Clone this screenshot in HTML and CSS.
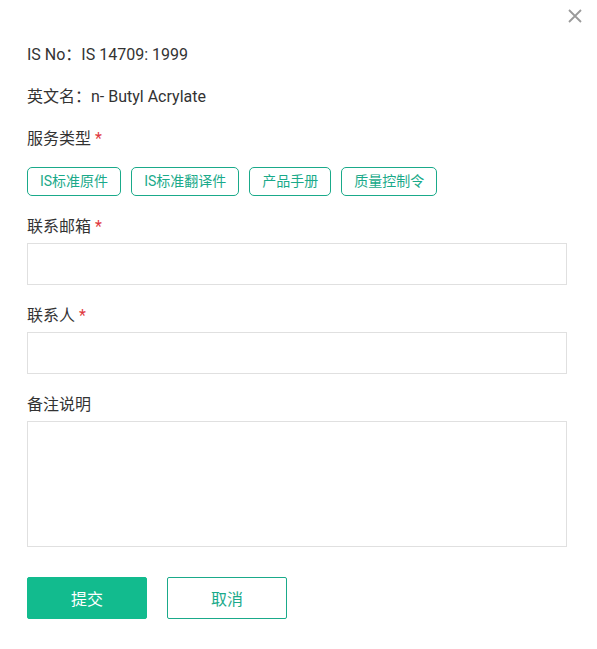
FILE: index.html
```html
<!DOCTYPE html>
<html lang="zh">
<head>
<meta charset="utf-8">
<link rel="stylesheet" href="styles.css">
</head>
<body>
<div class="dialog">
  <button class="close" type="button" aria-label="关闭">
    <svg width="16" height="16" viewBox="0 0 16 16"><path d="M2 2L14 14M14 2L2 14" stroke="#9a9a9a" stroke-width="1.8" fill="none"/></svg>
  </button>
  <div class="info">IS No：IS 14709: 1999</div>
  <div class="info">英文名：n- Butyl Acrylate</div>
  <div class="label">服务类型 <span class="req">*</span></div>
  <div class="tags">
    <span class="tag">IS标准原件</span>
    <span class="tag">IS标准翻译件</span>
    <span class="tag">产品手册</span>
    <span class="tag">质量控制令</span>
  </div>
  <div class="field">
    <div class="label">联系邮箱 <span class="req">*</span></div>
    <input class="input" type="text">
  </div>
  <div class="field">
    <div class="label">联系人 <span class="req">*</span></div>
    <input class="input" type="text">
  </div>
  <div class="field">
    <div class="label">备注说明</div>
    <textarea class="textarea"></textarea>
  </div>
  <div class="actions">
    <button class="btn primary" type="button">提交</button>
    <button class="btn ghost" type="button">取消</button>
  </div>
</div>
</body>
</html>
```

FILE: styles.css
```css
html, body {
  margin: 0;
  padding: 0;
  background: #fff;
}
body {
  font-family: Roboto, "Noto Sans CJK SC", sans-serif;
  color: #333;
}
.dialog {
  position: relative;
  padding: 44px 30px 0 27px;
}
.close {
  position: absolute;
  top: 8px;
  right: 14px;
  width: 16px;
  height: 16px;
  padding: 0;
  border: 0;
  background: none;
  display: flex;
}
.info, .label {
  font-size: 16px;
  line-height: 22px;
  height: 22px;
}
.info {
  margin-bottom: 20px;
}
.req {
  color: #e0393e;
}
.tags {
  display: flex;
  gap: 10px;
  margin-top: 17px;
}
.tag {
  box-sizing: border-box;
  height: 29px;
  line-height: 27px;
  padding: 0 12px;
  border: 1px solid #1aaa8a;
  border-radius: 5px;
  font-size: 14px;
  color: #1aaa8a;
}
.field {
  margin-top: 20px;
  display: flex;
  flex-direction: column;
  gap: 5px;
}
.input, .textarea {
  box-sizing: border-box;
  width: 100%;
  border: 1px solid #e0e0e0;
  margin: 0;
  padding: 0 10px;
  font: inherit;
  outline: none;
}
.input {
  height: 42px;
}
.textarea {
  height: 126px;
  resize: none;
  display: block;
}
.actions {
  display: flex;
  gap: 20px;
  margin-top: 30px;
}
.btn {
  box-sizing: border-box;
  width: 120px;
  height: 42px;
  border-radius: 2px;
  font-family: inherit;
  font-size: 16px;
  cursor: pointer;
}
.primary {
  background: #12bb8e;
  border: 1px solid #12bb8e;
  color: #fff;
}
.ghost {
  background: #fff;
  border: 1px solid #1aaa8a;
  color: #1aaa8a;
}
```
